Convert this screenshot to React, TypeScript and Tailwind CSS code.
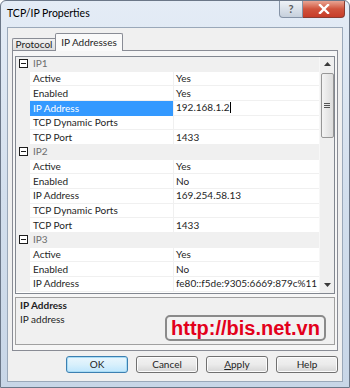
type Row = { name: string; value?: string; cat?: boolean; selected?: boolean };

const rows: Row[] = [
  { name: "IP1", cat: true },
  { name: "Active", value: "Yes" },
  { name: "Enabled", value: "Yes" },
  { name: "IP Address", value: "192.168.1.2", selected: true },
  { name: "TCP Dynamic Ports", value: "" },
  { name: "TCP Port", value: "1433" },
  { name: "IP2", cat: true },
  { name: "Active", value: "Yes" },
  { name: "Enabled", value: "No" },
  { name: "IP Address", value: "169.254.58.13" },
  { name: "TCP Dynamic Ports", value: "" },
  { name: "TCP Port", value: "1433" },
  { name: "IP3", cat: true },
  { name: "Active", value: "Yes" },
  { name: "Enabled", value: "No" },
  { name: "IP Address", value: "fe80::f5de:9305:6669:879c%11" },
];

function Minus() {
  return (
    <span className="w-[9px] h-[9px] border border-[#1e1e1e] bg-white flex items-center justify-center">
      <span className="w-[5px] h-px bg-[#1e1e1e]" />
    </span>
  );
}

function GridRow({ r }: { r: Row }) {
  if (r.cat) {
    return (
      <div className="h-[14.67px] flex items-center bg-[#f0f0f0] border-b border-[#f0f0f0] shrink-0">
        <div className="w-[14px] flex justify-center pl-[1px]">
          <Minus />
        </div>
        <span className="pl-[3px] text-[#6d6d6d]">{r.name}</span>
      </div>
    );
  }
  return (
    <div className="h-[14.67px] flex shrink-0">
      <div className="w-[14px] bg-[#f0f0f0]" />
      <div
        className={
          r.selected
            ? "w-[143px] flex items-center pl-[3px] bg-[#3399ff] text-white"
            : "w-[143px] flex items-center pl-[3px] bg-white border-b border-[#f0f0f0]"
        }
      >
        {r.name}
      </div>
      <div className="w-px bg-[#f0f0f0]" />
      <div className="flex-1 flex items-center pl-[2px] bg-white border-b border-[#f0f0f0] whitespace-nowrap">
        {r.value}
        {r.selected && <span className="ml-[1px] w-px h-[11px] bg-black" />}
      </div>
    </div>
  );
}

function Btn({ children, def }: { children: React.ReactNode; def?: boolean }) {
  return (
    <div
      className={
        def
          ? "w-[62px] h-[17px] rounded-[3px] border border-[#3c7fb1] bg-gradient-to-b from-[#eaf6fd] via-[#d9f0fc] to-[#bee6fd] flex items-center justify-center shadow-[inset_0_0_0_1px_#a8dcf5]"
          : "w-[62px] h-[17px] rounded-[3px] border border-[#707070] bg-gradient-to-b from-[#f2f2f2] via-[#ebebeb] to-[#d5d5d5] flex items-center justify-center shadow-[inset_0_0_0_1px_#fcfcfc]"
      }
    >
      {children}
    </div>
  );
}

export default function App() {
  return (
    <div
      className="w-[350px] h-[388px] relative overflow-hidden bg-gradient-to-b from-[#e4ecf6] via-[#d3dfed] to-[#c8d6e7] border border-[#6b7788] rounded-t-[6px] text-[10px] text-[#1e1e1e]"
      style={{ fontFamily: "'Segoe UI', Lato, 'Liberation Sans', sans-serif" }}
    >
      {/* title bar */}
      <div className="h-[26px] flex items-center pl-[6px] pb-[1px]">
        <span className="text-[10.5px] text-black">TCP/IP Properties</span>
      </div>
      <div className="absolute top-0 right-[4px] flex">
        <div className="w-[24px] h-[17px] rounded-bl-[4px] border border-[#8593a6] border-t-0 bg-gradient-to-b from-[#eef2f6] to-[#c6d0dc] flex items-center justify-center text-[11px] text-[#5a5a5a] font-bold">
          ?
        </div>
        <div className="w-[42px] h-[17px] rounded-br-[4px] border border-[#8a3b30] border-t-0 border-l-0 bg-gradient-to-b from-[#e8a493] via-[#d0533c] to-[#c73c28] flex items-center justify-center">
          <svg width="12" height="10" viewBox="0 0 12 10">
            <path d="M2 1 L10 9 M10 1 L2 9" stroke="white" strokeWidth="2.4" strokeLinecap="square" />
          </svg>
        </div>
      </div>

      {/* body */}
      <div className="mx-[6px] h-[355px] bg-[#f0f0f0] border border-[#9aa8b9] flex flex-col">
        {/* tabs */}
        <div className="flex items-end pl-[4px] h-[22px] pt-[5px]">
          <div className="w-[43px] h-[12px] border border-[#898c95] border-r-0 border-b-0 rounded-tl-[2px] bg-gradient-to-b from-[#f2f2f2] to-[#dedede] flex items-center justify-center leading-none pb-[1px]">
            Protocol
          </div>
          <div className="w-[68px] h-[18px] -mb-px relative z-10 border border-[#898c95] border-b-0 rounded-t-[2px] bg-[#fafafa] flex items-center justify-center leading-none pb-[2px]">
            IP Addresses
          </div>
        </div>
        {/* tab panel */}
        <div className="ml-[4px] w-[326px] h-[301px] border border-[#898c95] bg-[#f6f6f6] px-[2px] pt-[5px] flex flex-col">
          <div className="h-[238px] border border-[#828790] bg-white flex overflow-hidden">
            <div className="flex-1 flex flex-col overflow-hidden">
              {rows.map((r, i) => (
                <GridRow key={i} r={r} />
              ))}
            </div>
            <div className="w-[15px] bg-[#efefef] border-l border-[#f7f7f7] flex flex-col items-center relative">
              <svg className="mt-[5px]" width="7" height="4" viewBox="0 0 7 4">
                <path d="M0 4 L3.5 0 L7 4 Z" fill="#3a3a3a" />
              </svg>
              <div className="mt-[7px] w-[13px] h-[65px] rounded-[2px] border border-[#979797] bg-gradient-to-r from-[#f4f4f4] to-[#dcdcdc] flex flex-col items-center justify-center gap-[1px]">
                <span className="w-[6px] h-px bg-[#555]" />
                <span className="w-[6px] h-px bg-[#555]" />
                <span className="w-[6px] h-px bg-[#555]" />
              </div>
              <svg className="absolute bottom-[6px]" width="7" height="4" viewBox="0 0 7 4">
                <path d="M0 0 L7 0 L3.5 4 Z" fill="#3a3a3a" />
              </svg>
            </div>
          </div>
          <div className="mt-[3px] h-[48px] border border-[#a0a0a0] bg-[#f0f0f0] px-[4px]">
            <div className="font-bold leading-[14px]">IP Address</div>
            <div className="leading-[14px]">IP address</div>
          </div>
        </div>
        {/* buttons */}
        <div className="flex justify-end gap-[8px] pr-[4px] mt-[5px]">
          <Btn def>OK</Btn>
          <Btn>Cancel</Btn>
          <Btn>
            <span>
              <span className="underline">A</span>pply
            </span>
          </Btn>
          <Btn>Help</Btn>
        </div>
      </div>

      {/* watermark overlay */}
      <div className="absolute left-[164px] top-[314px] w-[161px] h-[26px] rounded-[5px] border-2 border-[#8a8a8a] bg-[#f2f2f2] flex items-center justify-center">
        <span
          className="text-[20px] font-bold text-[#e3001b] leading-none"
          style={{ fontFamily: "'Liberation Sans', Arial, sans-serif" }}
        >
          http://bis.net.vn
        </span>
      </div>
    </div>
  );
}
